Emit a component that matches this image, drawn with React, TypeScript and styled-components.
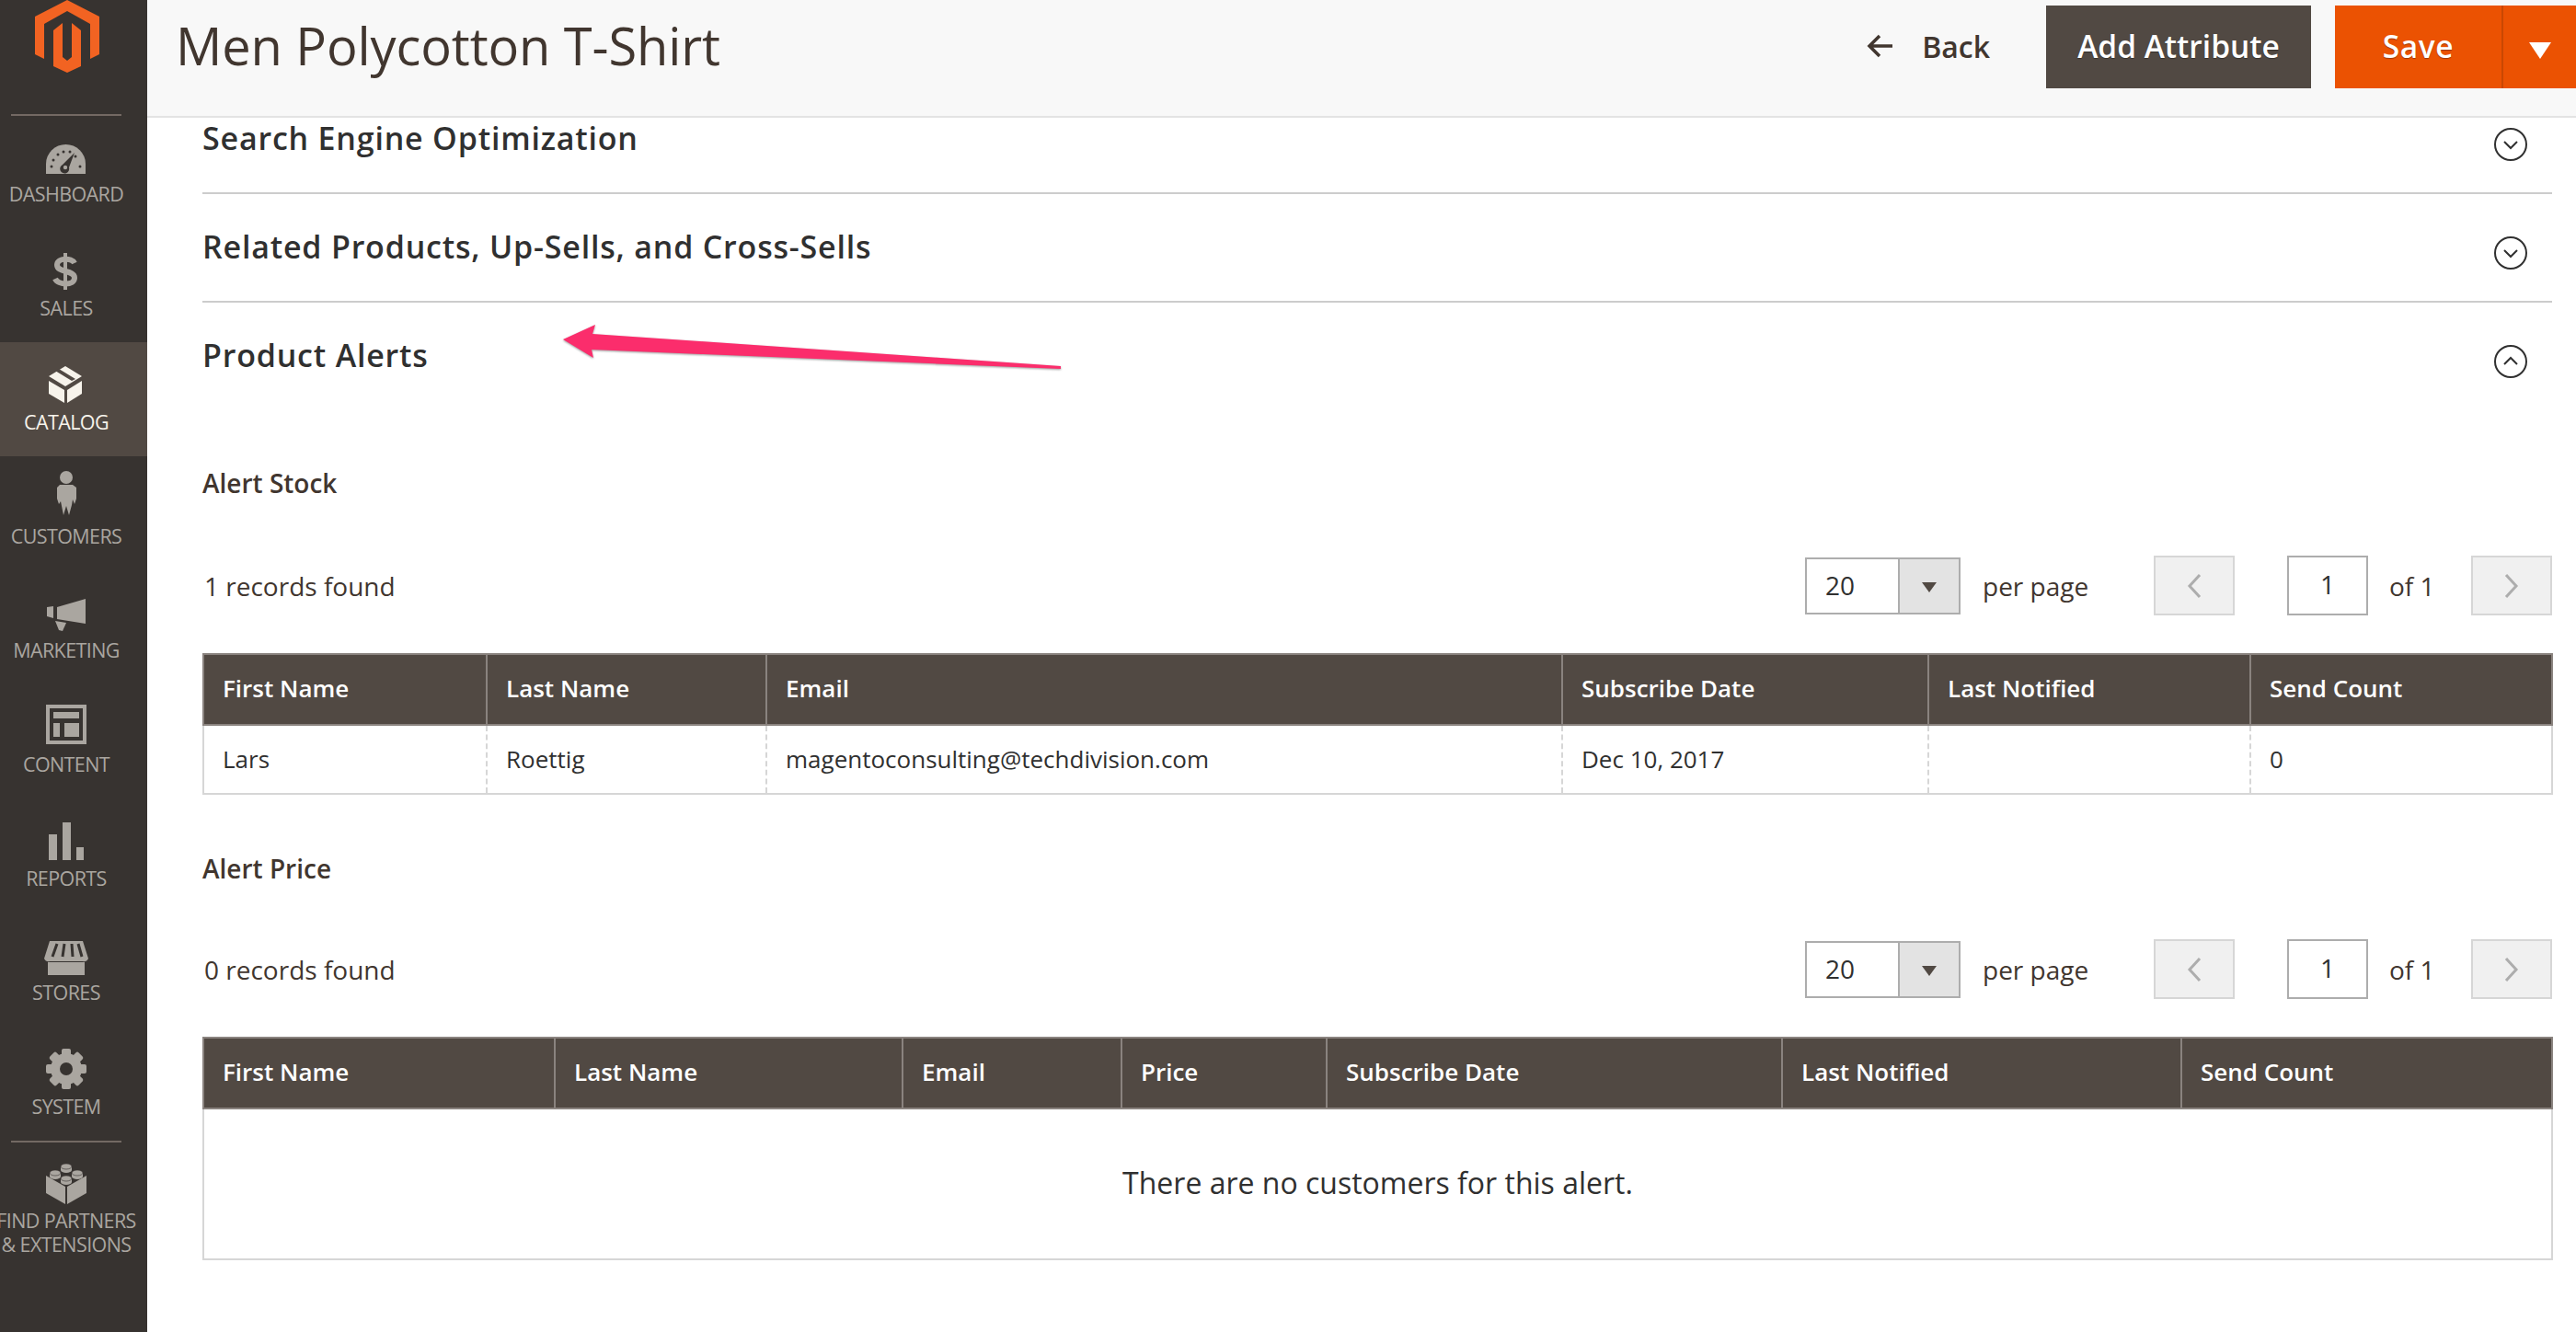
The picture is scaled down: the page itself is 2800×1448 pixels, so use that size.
import { createGlobalStyle } from "styled-components";
import styled from "styled-components";

const GlobalStyle = createGlobalStyle`
  html, body {
    margin: 0;
    padding: 0;
    background: #fff;
    font-family: "Open Sans", "Noto Sans", sans-serif;
    color: #303030;
    overflow: hidden;
  }
  * { box-sizing: border-box; }
`;

const Page = styled.div`
  position: relative;
  display: flex;
  width: 2800px;
  height: 1448px;
  overflow: hidden;
`;

const Sidebar = styled.nav`
  flex: 0 0 160px;
  background: #373330;
`;
const LogoBlock = styled.div`
  height: 124px;
`;
const Divider = styled.div`
  width: 120px;
  height: 2px;
  margin: 0 0 -2px 12px;
  background: #736963;
  position: relative;
`;
const NavItem = styled.div<{ active?: boolean }>`
  height: 124px;
  padding-right: 16px;
  background: ${(props) => (props.active ? "#514943" : "transparent")};
  color: ${(props) => (props.active ? "#f7f3eb" : "#aaa6a0")};
  svg {
    display: block;
  }
`;
const NavLabel = styled.div`
  width: 144px;
  font-size: 21.5px;
  font-weight: 500;
  line-height: 26px;
  letter-spacing: -0.6px;
  text-align: center;
  white-space: nowrap;
  display: flex;
  flex-direction: column;
  align-items: center;
`;

const Main = styled.main`
  flex: 1;
  min-width: 0;
`;
const Header = styled.header`
  position: relative;
  z-index: 2;
  display: flex;
  align-items: flex-start;
  height: 128px;
  padding: 6px 0 0 31px;
  background: #f8f8f8;
  border-bottom: 2px solid #e3e3e3;
`;
const Title = styled.h1`
  flex: 1;
  margin: 0;
  font-size: 56px;
  line-height: 86px;
  font-weight: 400;
  letter-spacing: -0.1px;
  color: #41362f;
`;
const BackLink = styled.div`
  display: flex;
  align-items: center;
  gap: 30px;
  height: 88px;
  margin-right: 61px;
  font-size: 32px;
  font-weight: 600;
  color: #41362f;
`;
const ActionButton = styled.div`
  width: 288px;
  height: 90px;
  padding-bottom: 3px;
  display: flex;
  align-items: center;
  justify-content: center;
  background: #514943;
  color: #fff;
  font-size: 33.5px;
  font-weight: 600;
  text-shadow: 0 1px 1px rgba(0, 0, 0, 0.35);
`;
const SaveGroup = styled.div`
  display: flex;
  height: 90px;
  margin-left: 26px;
  background: #eb5202;
  color: #fff;
`;
const SaveButton = styled.div`
  width: 183px;
  padding-bottom: 3px;
  display: flex;
  align-items: center;
  justify-content: center;
  font-size: 33.5px;
  font-weight: 600;
  letter-spacing: 0.6px;
  text-shadow: 0 1px 1px rgba(0, 0, 0, 0.35);
  border-right: 2px solid #c94702;
`;
const SaveToggle = styled.div`
  width: 79px;
  display: flex;
  align-items: center;
  justify-content: center;
  padding-top: 8px;
`;
const Triangle = styled.span`
  width: 0;
  height: 0;
  border-left: 12px solid transparent;
  border-right: 12px solid transparent;
  border-top: 18px solid #fff;
`;

const Content = styled.div`
  padding: 0 26px 0 60px;
`;
const SectionRow = styled.div<{ first?: boolean; open?: boolean }>`
  display: flex;
  justify-content: space-between;
  height: 118px;
  margin-top: ${(props) => (props.first ? "-35px" : "0")};
  padding: 32px 27px 0 0;
  border-bottom: 2px solid ${(props) => (props.open ? "transparent" : "#cccccc")};
`;
const SectionTitle = styled.h2`
  margin: 0;
  font-size: 34px;
  line-height: 50px;
  font-weight: 600;
  letter-spacing: 0.8px;
  color: #303030;
`;
const Chevron = styled.svg`
  margin-top: 14px;
`;

const SubTitle = styled.h3<{ top: number }>`
  margin: ${(props) => props.top}px 0 0;
  font-size: 28px;
  line-height: 40px;
  font-weight: 600;
  color: #41362f;
`;
const Toolbar = styled.div<{ top: number }>`
  display: flex;
  align-items: center;
  height: 65px;
  margin: ${(props) => props.top}px 0 41px;
  font-size: 28px;
  color: #41362f;
`;
const Records = styled.div`
  flex: 1;
  padding-left: 2px;
`;
const PageSelect = styled.div`
  display: flex;
  width: 169px;
  height: 62px;
  margin-right: 24px;
  border: 2px solid #adadad;
  background: #fff;
`;
const SelectValue = styled.div`
  flex: 1;
  padding-left: 20px;
  line-height: 56px;
  color: #303030;
`;
const SelectCaret = styled.div`
  flex: 0 0 66px;
  display: flex;
  align-items: center;
  justify-content: center;
  padding-top: 4px;
  background: #e3e3e3;
  border-left: 2px solid #adadad;
`;
const CaretMark = styled.span`
  width: 0;
  height: 0;
  border-left: 8px solid transparent;
  border-right: 8px solid transparent;
  border-top: 11px solid #514943;
`;
const PerPage = styled.div`
  width: 186px;
`;
const PageArrow = styled.div<{ gap?: number }>`
  width: 88px;
  height: 65px;
  margin-right: ${(props) => props.gap ?? 0}px;
  display: flex;
  align-items: center;
  justify-content: center;
  background: #f0f0f0;
  border: 2px solid #d6d6d6;
`;
const PageInput = styled.div`
  width: 88px;
  height: 65px;
  margin-right: 23px;
  border: 2px solid #adadad;
  text-align: center;
  line-height: 58px;
  color: #303030;
`;
const OfLabel = styled.div`
  width: 89px;
`;

const Grid = styled.table`
  width: 2553px;
  table-layout: fixed;
  border-collapse: collapse;
  font-size: 26px;
`;
const Col = styled.col<{ w: number }>`
  width: ${(props) => props.w}px;
`;
const HeadCell = styled.th`
  height: 77px;
  padding: 0 20px 3px;
  text-align: left;
  font-weight: 600;
  color: #fff;
  background: #514943;
  border: 2px solid #8a837f;
`;
const Cell = styled.td`
  height: 75px;
  padding: 0 20px 2px;
  color: #303030;
  border-left: 2px dashed #d6d6d6;
  border-right: 2px dashed #d6d6d6;
  border-bottom: 2px solid #d6d6d6;
  &:first-child {
    border-left: 2px solid #d6d6d6;
  }
  &:last-child {
    border-right: 2px solid #d6d6d6;
  }
`;
const EmptyCell = styled.td`
  height: 164px;
  padding-bottom: 5px;
  text-align: center;
  font-size: 32px;
  color: #303030;
  border: 2px solid #d6d6d6;
`;

const PinkArrow = styled.svg`
  position: absolute;
  left: 600px;
  top: 340px;
  filter: drop-shadow(0 1px 1px rgba(0, 0, 0, 0.4));
`;

function Logo() {
  return (
    <svg width="144" height="82" viewBox="0 0 144 82">
      <path
        fill="#f26322"
        d="M73 0 L108 18 V59 L98 64 V26 L73 12 L48 26 V64 L38 59 V18 Z M58 33 L68 25 V62 L73 66 L78 62 V25 L88 33 V72 L73 79 L58 72 Z"
      />
    </svg>
  );
}

function NavIcon({ children }: { children: React.ReactNode }) {
  return (
    <svg width="144" height="74" viewBox="0 0 144 74" fill="currentColor">
      {children}
    </svg>
  );
}

const GaugeDots = [
  [56, 57], [58, 50], [63, 44], [69, 41], [76, 41], [82, 46], [87, 57],
];

const navItems = [
  {
    label: ["DASHBOARD"],
    icon: (
      <>
        <path d="M50 65 V54 A21.5 21 0 0 1 93 54 V65 Z" />
        {GaugeDots.map(([x, y]) => (
          <circle key={x} cx={x} cy={y} r="1.5" fill="#373330" />
        ))}
        <path d="M81 42 L75 58 A5 5 0 1 1 68 55 Z" fill="#373330" />
        <circle cx="71" cy="58" r="2.2" />
      </>
    ),
  },
  {
    label: ["SALES"],
    icon: (
      <>
        <path
          d="M81 38 C78 32 62 32 62 40 C62 49 81 45 81 54 C81 63 63 62 60 55"
          fill="none"
          stroke="currentColor"
          strokeWidth="6"
        />
        <path d="M71 27 V67" stroke="currentColor" strokeWidth="4" />
      </>
    ),
  },
  {
    label: ["CATALOG"],
    active: true,
    icon: (
      <>
        <path d="M71 26 L89 37 L71 48 L53 37 Z" />
        <path d="M60 31 L78 42 L82 40 L64 29 Z" fill="#514943" />
        <path d="M53 42 L70 52 V66 L53 56 Z" />
        <path d="M73 52 L89 42 V56 L73 66 Z" />
      </>
    ),
  },
  {
    label: ["CUSTOMERS"],
    icon: (
      <>
        <circle cx="72" cy="23" r="7" />
        <path d="M65 31 H79 L83 34 V46 L81 52 L79 47 L78 53 L75 64 L72 54 L69 64 L66 49 L64 52 L62 46 V34 Z" />
      </>
    ),
  },
  {
    label: ["MARKETING"],
    icon: (
      <>
        <path d="M62 40 L93 31 V58 L62 53 Z" />
        <path d="M51 40 L58 39 V52 L51 50 Z" />
        <path d="M60 55 L72 57 L68 66 L64 65 Z" />
      </>
    ),
  },
  {
    label: ["CONTENT"],
    icon: (
      <>
        <rect x="52" y="24" width="40" height="39" fill="none" stroke="currentColor" strokeWidth="4" />
        <rect x="58" y="30" width="28" height="7" />
        <rect x="58" y="42" width="7" height="15" />
        <rect x="70" y="42" width="16" height="15" />
      </>
    ),
  },
  {
    label: ["REPORTS"],
    icon: (
      <>
        <rect x="53" y="39" width="9" height="28" />
        <rect x="68" y="26" width="9" height="41" />
        <rect x="83" y="53" width="8" height="14" />
      </>
    ),
  },
  {
    label: ["STORES"],
    icon: (
      <>
        <path d="M54 31 H90 L96 50 Q94 54 90 53 H54 Q50 54 48 50 Z" />
        <path d="M62 34 L57 48 M70 34 L68 48 M78 34 L79 48 M85 34 L89 48" stroke="#373330" strokeWidth="3" />
        <path d="M52 54 H92 V68 H52 Z" />
      </>
    ),
  },
  {
    label: ["SYSTEM"],
    icon: (
      <>
        <circle cx="72" cy="46" r="17" />
        {[0, 45, 90, 135, 180, 225, 270, 315].map((a) => (
          <rect key={a} x="67" y="24" width="10" height="10" rx="2" transform={`rotate(${a} 72 46)`} />
        ))}
        <circle cx="72" cy="46" r="7" fill="#373330" />
      </>
    ),
  },
  {
    label: ["FIND PARTNERS", "& EXTENSIONS"],
    icon: (
      <>
        <path d="M50 38 L71 50 V69 L50 57 Z" />
        <path d="M73 50 L94 38 V57 L73 69 Z" />
        {[[72, 29], [60, 36], [84, 36], [72, 42]].map(([x, y]) => (
          <g key={`${x}-${y}`}>
            <rect x={x - 6} y={y - 1} width="12" height="4" />
            <ellipse cx={x} cy={y + 3} rx="6" ry="3" />
            <ellipse cx={x} cy={y - 1} rx="6" ry="3" stroke="#373330" strokeWidth="0.6" />
          </g>
        ))}
      </>
    ),
  },
];

function SectionChevron({ up }: { up?: boolean }) {
  return (
    <Chevron width="36" height="36" viewBox="0 0 36 36" fill="none" stroke="#303030">
      <circle cx="18" cy="18" r="17" strokeWidth="2" />
      <path d={up ? "M11 21 L18 14 L25 21" : "M11 15 L18 22 L25 15"} strokeWidth="2" />
    </Chevron>
  );
}

function PagerChevron({ right }: { right?: boolean }) {
  return (
    <svg width="16" height="28" viewBox="0 0 16 28" fill="none" stroke="#adadad" strokeWidth="3">
      <path d={right ? "M2 2 L13 14 L2 26" : "M14 2 L3 14 L14 26"} />
    </svg>
  );
}

function GridToolbar({ found, top }: { found: string; top: number }) {
  return (
    <Toolbar top={top}>
      <Records>{found}</Records>
      <PageSelect>
        <SelectValue>20</SelectValue>
        <SelectCaret>
          <CaretMark />
        </SelectCaret>
      </PageSelect>
      <PerPage>per page</PerPage>
      <PageArrow gap={57}>
        <PagerChevron />
      </PageArrow>
      <PageInput>1</PageInput>
      <OfLabel>of 1</OfLabel>
      <PageArrow>
        <PagerChevron right />
      </PageArrow>
    </Toolbar>
  );
}

const stockColumns = [
  { name: "First Name", w: 308 },
  { name: "Last Name", w: 304 },
  { name: "Email", w: 865 },
  { name: "Subscribe Date", w: 398 },
  { name: "Last Notified", w: 350 },
  { name: "Send Count", w: 328 },
];
const stockRow = ["Lars", "Roettig", "magentoconsulting@techdivision.com", "Dec 10, 2017", "", "0"];
const priceColumns = [
  { name: "First Name", w: 382 },
  { name: "Last Name", w: 378 },
  { name: "Email", w: 238 },
  { name: "Price", w: 223 },
  { name: "Subscribe Date", w: 495 },
  { name: "Last Notified", w: 434 },
  { name: "Send Count", w: 403 },
];

function App() {
  return (
    <Page>
      <GlobalStyle />
      <Sidebar>
        <LogoBlock>
          <Logo />
        </LogoBlock>
        <Divider />
        {navItems.map((item, i) => (
          <div key={item.label[0]}>
            {i === navItems.length - 1 && <Divider />}
            <NavItem active={item.active}>
              <NavIcon>{item.icon}</NavIcon>
              <NavLabel>
                {item.label.map((line) => (
                  <span key={line}>{line}</span>
                ))}
              </NavLabel>
            </NavItem>
          </div>
        ))}
      </Sidebar>
      <Main>
        <Header>
          <Title>Men Polycotton T-Shirt</Title>
          <BackLink>
            <svg width="30" height="26" viewBox="0 0 30 26" fill="none" stroke="#41362f" strokeWidth="3.5">
              <path d="M14 2 L3 13 L14 24 M3 13 H28" />
            </svg>
            Back
          </BackLink>
          <ActionButton>Add Attribute</ActionButton>
          <SaveGroup>
            <SaveButton>Save</SaveButton>
            <SaveToggle>
              <Triangle />
            </SaveToggle>
          </SaveGroup>
        </Header>
        <Content>
          <SectionRow first>
            <SectionTitle>Search Engine Optimization</SectionTitle>
            <SectionChevron />
          </SectionRow>
          <SectionRow>
            <SectionTitle>Related Products, Up-Sells, and Cross-Sells</SectionTitle>
            <SectionChevron />
          </SectionRow>
          <SectionRow open>
            <SectionTitle>Product Alerts</SectionTitle>
            <SectionChevron up />
          </SectionRow>

          <SubTitle top={58}>Alert Stock</SubTitle>
          <GridToolbar found="1 records found" top={59} />
          <Grid>
            <colgroup>
              {stockColumns.map((c) => (
                <Col key={c.name} w={c.w} />
              ))}
            </colgroup>
            <thead>
              <tr>
                {stockColumns.map((c) => (
                  <HeadCell key={c.name}>{c.name}</HeadCell>
                ))}
              </tr>
            </thead>
            <tbody>
              <tr>
                {stockRow.map((value, i) => (
                  <Cell key={i}>{value}</Cell>
                ))}
              </tr>
            </tbody>
          </Grid>

          <SubTitle top={60}>Alert Price</SubTitle>
          <GridToolbar found="0 records found" top={57} />
          <Grid>
            <colgroup>
              {priceColumns.map((c) => (
                <Col key={c.name} w={c.w} />
              ))}
            </colgroup>
            <thead>
              <tr>
                {priceColumns.map((c) => (
                  <HeadCell key={c.name}>{c.name}</HeadCell>
                ))}
              </tr>
            </thead>
            <tbody>
              <tr>
                <EmptyCell colSpan={7}>There are no customers for this alert.</EmptyCell>
              </tr>
            </tbody>
          </Grid>
        </Content>
      </Main>
      <PinkArrow width="560" height="70" viewBox="600 340 560 70">
        <path
          fill="#fb2d6c"
          d="M612 369 L647 353 L644 363 L1153 398 V401 L643 380 L645 389 Z"
        />
      </PinkArrow>
    </Page>
  );
}

export default App;
